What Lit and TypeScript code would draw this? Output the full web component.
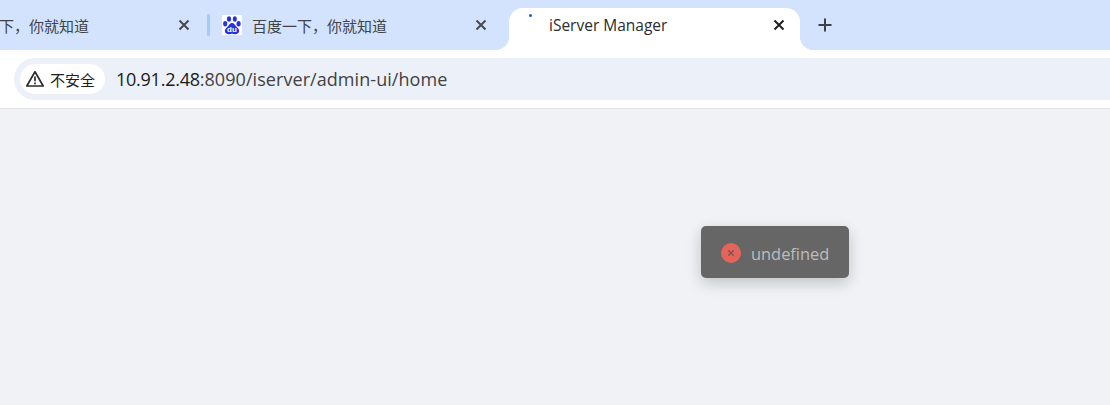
import { LitElement, html, css } from "lit";
import { customElement } from "lit/decorators.js";

const closeIcon = html`<svg class="x" width="12" height="12" viewBox="0 0 12 12"><path d="M1.500 1.500L10.500 10.500M10.500 1.500L1.500 10.500" fill="none" stroke="currentColor" stroke-width="2"/></svg>`;

const baidu = html`<svg class="fav" width="20" height="20" viewBox="0 0 20 20">
  <rect width="20" height="20" fill="#fff"/>
  <g fill="#2932e1">
    <ellipse cx="7" cy="4" rx="2.100" ry="2.800"/>
    <ellipse cx="12.800" cy="4" rx="2" ry="2.800"/>
    <ellipse cx="3.200" cy="8.800" rx="2.100" ry="2.700"/>
    <ellipse cx="16.600" cy="8.800" rx="2.100" ry="2.700"/>
    <path d="M10 8c-2 0-2.600 1.800-4 3.200C4.300 12.800 2.400 14.200 2.900 16.600 3.400 18.800 5.400 19.400 7 19.200c1.200-.2 2-.4 3-.4s1.800.2 3 .4c1.600.2 3.600-.4 4.100-2.600.5-2.400-1.400-3.800-3.100-5.400C12.600 9.800 12 8 10 8z"/>
  </g>
  <text class="du" x="10" y="17.200" text-anchor="middle">du</text>
</svg>`;

@customElement("app-root")
export class AppRoot extends LitElement {
  static styles = css`
    :host {
      display: block;
      position: relative;
      width: 1110px;
      height: 405px;
      overflow: hidden;
      background: #f0f2f5;
      font-family: "Open Sans", "Noto Sans CJK SC", sans-serif;
    }
    .strip {
      display: flex;
      height: 50px;
      background: #d3e3fd;
      overflow: hidden;
      align-items: flex-end;
    }
    .tab {
      display: flex;
      align-items: center;
      height: 42px;
      box-sizing: border-box;
      padding-bottom: 8px;
      font-size: 15px;
      color: #3f4348;
      position: relative;
      flex: none;
    }
    .tab .title {
      flex: 1;
      white-space: nowrap;
      overflow: hidden;
    }
    .x {
      flex: none;
      color: #474a4f;
    }
    .du {
      font-family: "Liberation Sans", sans-serif;
      font-size: 8px;
      font-weight: 700;
      fill: #fff;
    }
    .t1 {
      width: 207px;
      padding-right: 17px;
      font-family: "Noto Sans CJK SC", sans-serif;
    }
    .t1 .title {
      margin-left: -1px;
      overflow: visible;
    }
    .sep {
      flex: none;
      width: 3px;
      height: 22px;
      margin-bottom: 14px;
      border-radius: 1.500px;
      background: #a8c7fa;
    }
    .t2 {
      width: 299px;
      padding-left: 12px;
      padding-right: 22px;
      font-family: "Noto Sans CJK SC", sans-serif;
      gap: 10px;
    }
    .fav {
      flex: none;
    }
    .t3 {
      width: 291px;
      padding-left: 40px;
      padding-right: 15px;
      background: #fff;
      border-radius: 14px 14px 0 0;
      color: #2a2c30;
      font-size: 15.500px;
    }
    .t3 .x {
      color: #1f2124;
    }
    .t3::before,
    .t3::after {
      content: "";
      position: absolute;
      bottom: 0;
      width: 14px;
      height: 14px;
      background: radial-gradient(circle at var(--cx) 0, #d3e3fd 14px, #fff 14.500px);
    }
    .t3::before {
      left: -14px;
      --cx: 0;
    }
    .t3::after {
      right: -14px;
      --cx: 14px;
    }
    .dot {
      position: absolute;
      left: 20px;
      top: 6px;
      width: 3px;
      height: 3px;
      border-radius: 50%;
      background: #1a56d6;
    }
    .plus {
      flex: none;
      margin: 0 0 18px 18px;
      color: #3d4043;
      display: block;
    }
    .toolbar {
      height: 59px;
      box-sizing: border-box;
      background: #fff;
      border-bottom: 1px solid #e1e3e6;
      padding: 8px 0 0 14px;
    }
    .omni {
      display: flex;
      align-items: center;
      height: 42px;
      background: #ebf0f9;
      border-radius: 21px 0 0 21px;
      padding-left: 6px;
    }
    .chip {
      display: flex;
      align-items: center;
      gap: 4px;
      width: 85px;
      height: 30px;
      box-sizing: border-box;
      padding-left: 5px;
      border-radius: 15px;
      background: #fff;
      font-family: "Noto Sans CJK SC", sans-serif;
      font-size: 15px;
      color: #1f1f1f;
    }
    .chip span {
      margin-left: 1px;
    }
    .url {
      margin-left: 11px;
      font-size: 18px;
      color: #424242;
      white-space: nowrap;
      letter-spacing: 0.060px;
    }
    .url b {
      font-weight: 400;
      color: #1a1a1a;
      letter-spacing: -0.250px;
    }
    .toast {
      position: absolute;
      left: 701px;
      top: 226px;
      width: 148px;
      height: 52px;
      box-sizing: border-box;
      display: flex;
      align-items: center;
      gap: 10px;
      padding-left: 20px;
      padding-top: 2px;
      background: #666;
      border-radius: 5px;
      box-shadow: 0 5px 15px rgba(0, 0, 0, 0.2);
      color: #bdbdbd;
      font-size: 16.400px;
    }
    .err {
      flex: none;
      display: block;
    }
  `;

  render() {
    return html`
      <div class="strip">
        <div class="tab t1"><span class="title">下，你就知道</span>${closeIcon}</div>
        <div class="sep"></div>
        <div class="tab t2">${baidu}<span class="title">百度一下，你就知道</span>${closeIcon}</div>
        <div class="tab t3"><span class="dot"></span><span class="title">iServer Manager</span>${closeIcon}</div>
        <svg class="plus" width="14" height="14" viewBox="0 0 14 14"><path d="M7 0.500V13.500M0.500 7H13.500" fill="none" stroke="currentColor" stroke-width="2"/></svg>
      </div>
      <div class="toolbar">
        <div class="omni">
          <div class="chip">
            <svg width="20" height="20" viewBox="0 0 20 20"><path d="M10 2.800L18.200 17H1.800Z" fill="none" stroke="#2b2b2b" stroke-width="1.700" stroke-linejoin="round"/><path d="M10 7.600V12.300M10 13.400V15.200" stroke="#2b2b2b" stroke-width="1.700"/></svg>
            <span>不安全</span>
          </div>
          <div class="url"><b>10.91.2.48</b>:8090/iserver/admin-ui/home</div>
        </div>
      </div>
      <div class="toast">
        <svg class="err" width="20" height="20" viewBox="0 0 20 20"><circle cx="10" cy="10" r="10" fill="#e4645a"/><path d="M7.300 7.300L12.700 12.700M12.700 7.300L7.300 12.700" stroke="#7a5350" stroke-width="1.300"/></svg>
        <span>undefined</span>
      </div>
    `;
  }
}
